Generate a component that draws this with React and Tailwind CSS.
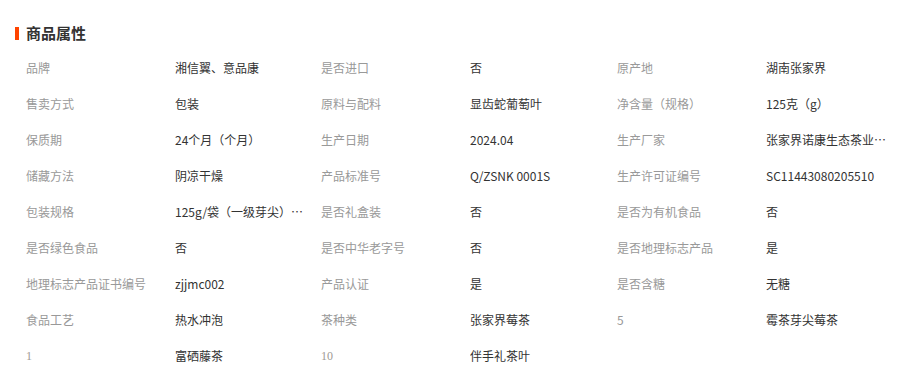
import React from 'react';

const attrs = [
  ['品牌', '湘信翼、意品康'],
  ['是否进口', '否'],
  ['原产地', '湖南张家界'],
  ['售卖方式', '包装'],
  ['原料与配料', '显齿蛇葡萄叶'],
  ['净含量（规格）', '125克（g）'],
  ['保质期', '24个月（个月）'],
  ['生产日期', '2024.04'],
  ['生产厂家', '张家界诺康生态茶业有限公司'],
  ['储藏方法', '阴凉干燥'],
  ['产品标准号', 'Q/ZSNK 0001S'],
  ['生产许可证编号', 'SC11443080205510'],
  ['包装规格', '125g/袋（一级芽尖）精品礼盒'],
  ['是否礼盒装', '否'],
  ['是否为有机食品', '否'],
  ['是否绿色食品', '否'],
  ['是否中华老字号', '否'],
  ['是否地理标志产品', '是'],
  ['地理标志产品证书编号', 'zjjmc002'],
  ['产品认证', '是'],
  ['是否含糖', '无糖'],
  ['食品工艺', '热水冲泡'],
  ['茶种类', '张家界莓茶'],
  ['5', '霉茶芽尖莓茶'],
  ['1', '富硒藤茶', 'serif'],
  ['10', '伴手礼茶叶', 'serif'],
];

const App = () => {
  return (
    <div className="bg-white w-[901px] h-[380px] overflow-hidden font-['Noto_Sans_CJK_SC','Microsoft_YaHei',sans-serif]">
      {/* Title */}
      <div className="mt-[18px] h-[30px] flex items-center pl-[15px]">
        <span className="w-[4px] h-[13px] bg-[#ff4400]" />
        <h2 className="ml-[7px] text-[15px] font-bold text-[#333]">商品属性</h2>
      </div>

      {/* Attributes */}
      <div className="grid grid-cols-[295px_296px_295px] pl-[16px] mt-[2px]">
        {attrs.map(([label, value, font], i) => (
          <div key={i} className="h-[36px] flex items-center pl-[10px] text-[12px]">
            <span
              className={`w-[149px] shrink-0 truncate ${
                font === 'serif' ? "font-['Liberation_Serif',serif] text-[#a09a94]" : 'text-[#999]'
              }`}
            >
              {label}
            </span>
            <span className="w-[130px] truncate text-[#333]">{value}</span>
          </div>
        ))}
      </div>
    </div>
  );
};

export default App;
